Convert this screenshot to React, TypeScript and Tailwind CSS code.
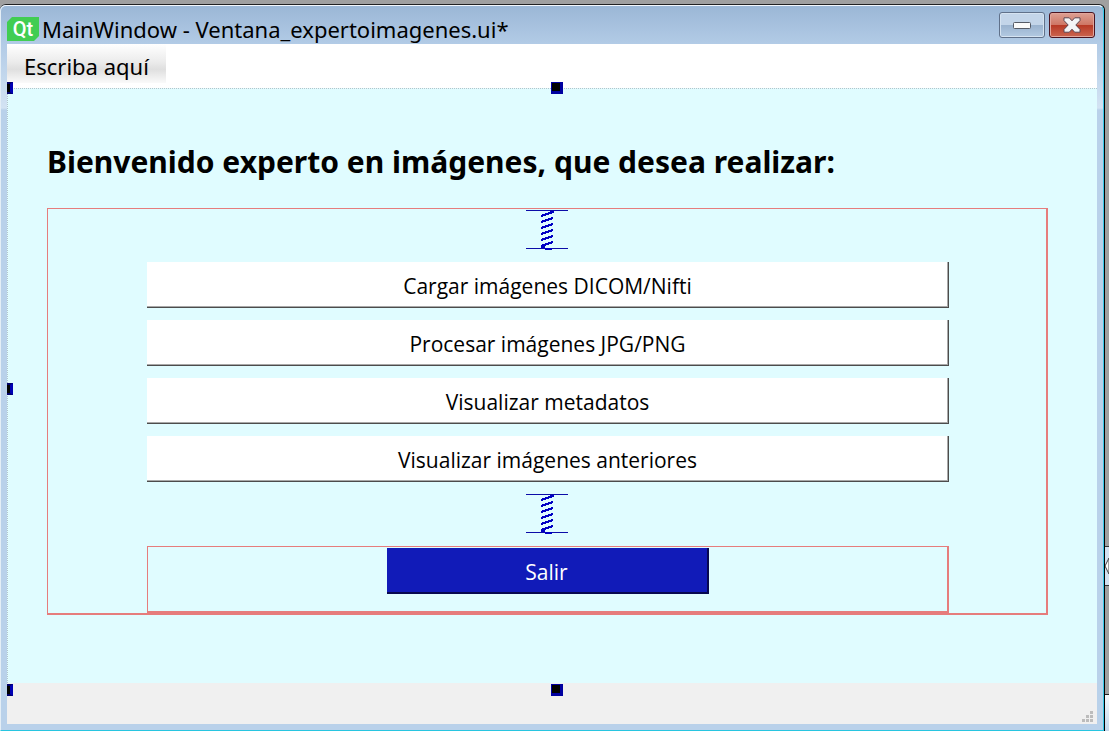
import React from "react";

const actions = [
  "Cargar imágenes DICOM/Nifti",
  "Procesar imágenes JPG/PNG",
  "Visualizar metadatos",
  "Visualizar imágenes anteriores",
];

function QtLogo() {
  return (
    <span className="relative flex h-6 w-8 shrink-0 items-center justify-center">
      <svg className="absolute inset-0 h-full w-full" viewBox="0 0 32 24" aria-hidden="true">
        <path d="M5 0H32V19L27 24H0V5Z" fill="#41cd52" />
      </svg>
      <span className="relative font-[Roboto,sans-serif] text-[20px] leading-6 font-medium text-white">Qt</span>
    </span>
  );
}

function Spring() {
  return (
    <svg className="h-10 w-11 shrink-0" viewBox="0 0 44 40" shapeRendering="crispEdges" aria-hidden="true">
      <path d="M0 .5H42M0 38.5H42" stroke="#0c0ca8" strokeWidth="1" />
      <path
        d="M15 6L27 2M15 12L27 8M15 18L27 14M15 24L27 20M15 30L27 26M15 36L27 32M15 37H19M19 39H26M24 2H28"
        stroke="#0000c4"
        strokeWidth="2.4"
        fill="none"
      />
    </svg>
  );
}

function Handle({ half = false }: { half?: boolean }) {
  return half ? (
    <span className="block h-3 w-1.5 border-y-2 border-r-[3px] border-y-[#000068] border-r-[#0000b4] bg-black" />
  ) : (
    <span className="block size-3 border-t-1 border-r-[3px] border-b-[3px] border-l-1 border-[#0000a0] bg-black" />
  );
}

function MinimizeIcon() {
  return (
    <svg className="h-[7px] w-[18px]" viewBox="0 0 18 7" aria-hidden="true">
      <rect x=".5" y=".5" width="17" height="6" rx="1" fill="#fafafa" stroke="#555b66" />
    </svg>
  );
}

function CloseIcon() {
  return (
    <svg className="h-4 w-[18px]" viewBox="0 0 18 16" aria-hidden="true">
      <path
        d="M1 .8H6.3L9 3.8L11.7 .8H17V3.6L12.8 8L17 12.4V15.2H11.7L9 12.2L6.3 15.2H1V12.4L5.2 8L1 3.6Z"
        fill="#f4f4f6"
        stroke="#5d4650"
        strokeLinejoin="round"
      />
    </svg>
  );
}

function SizeGrip() {
  return (
    <svg className="size-3" viewBox="0 0 12 12" shapeRendering="crispEdges" aria-hidden="true">
      <path
        d="M8 0h3v3h-3zM4 4h3v3h-3zM8 4h3v3h-3zM0 8h3v3h-3zM4 8h3v3h-3zM8 8h3v3h-3z"
        fill="#bcbcbc"
      />
    </svg>
  );
}

export default function App() {
  return (
    <div className="relative flex min-h-screen bg-[#a0a0a0] pt-1 font-['Noto_Sans',sans-serif] text-black">
      <div className="flex min-w-0 flex-1 flex-col rounded-t-md border-t border-r border-t-[#222] border-r-black bg-[#b9d1ea]">
        <div className="flex min-w-0 flex-1 flex-col rounded-t-md border border-t-[#f4f8fc] border-r-[#35c8e8] border-b-[#28c5e0] border-l-[#e4eef6] bg-[linear-gradient(#9bb7d6,#b2cbe6_38px,#d3e3f3_102px,#b9d1ea_104px)] px-1.5 pb-1.5">
          <header className="flex h-[38px] shrink-0 items-start justify-between">
            <div className="flex items-center gap-[3px] pt-2.5">
              <QtLogo />
              <h1 className="text-[22px] leading-[26px] whitespace-nowrap">MainWindow - Ventana_expertoimagenes.ui*</h1>
            </div>
            <div className="flex gap-1 pt-1.5 pr-0.5">
              <button
                aria-label="Minimizar"
                className="flex h-[26px] w-[46px] items-center justify-center rounded-[3px] border border-[#60718a] bg-[linear-gradient(#c3d5e9_0_48%,#9ab3cf_52%,#b3cae2)] shadow-[inset_0_0_0_1px_#d5e3f1]"
              >
                <MinimizeIcon />
              </button>
              <button
                aria-label="Cerrar"
                className="flex h-[26px] w-[46px] items-center justify-center rounded-[3px] border border-[#4b1420] bg-[linear-gradient(#dda093,#cf7766_48%,#b83a26_52%,#cb6550)] shadow-[inset_0_0_0_1px_#e2a69c]"
              >
                <CloseIcon />
              </button>
            </div>
          </header>

          <nav className="flex h-11 shrink-0 items-start bg-white">
            <button className="h-[39px] bg-[linear-gradient(#ffffff,#ececec_45%,#dfdfdf_65%,#fafafa)] px-[17px] pt-1 text-[22px] leading-8 whitespace-nowrap">
              Escriba aquí
            </button>
          </nav>

          <main className="relative flex-1 border-t border-l border-dotted border-[#b4c4ca] bg-[#e0fcff] pt-[51px] pr-[49px] pb-[68px] pl-[39px]">
            <div className="absolute -top-[7px] -bottom-[13px] -left-px flex flex-col justify-between">
              <Handle half />
              <Handle half />
              <Handle half />
            </div>
            <div className="absolute -top-[7px] -right-2 -bottom-[13px] left-0 flex flex-col items-center justify-between">
              <Handle />
              <Handle />
            </div>

            <h2 className="relative text-[30px] leading-[44px] font-bold whitespace-nowrap">
              Bienvenido experto en imágenes, que desea realizar:
            </h2>

            <section className="relative mt-6 flex flex-col items-center gap-3 border-t border-r-2 border-b-2 border-l border-[#e67c7c] pt-px pr-[97px] pl-[99px] font-['Open_Sans',sans-serif]">
              <Spring />
              {actions.map((label) => (
                <button
                  key={label}
                  className="h-[46px] w-full border-r border-b border-[#4c4c4c] bg-white pt-0.5 text-[21px] leading-7 shadow-[inset_-1px_-1px_0_#a8a8a8]"
                >
                  {label}
                </button>
              ))}
              <Spring />
              <div className="flex h-[67px] w-full items-start justify-center border-t border-r-2 border-b-2 border-l border-[#e67c7c] pt-px">
                <button className="h-[46px] w-[322px] border-r-2 border-b-2 border-[#080850] bg-[#111bb8] pt-1 text-[21px] leading-7 text-white">
                  Salir
                </button>
              </div>
            </section>
          </main>

          <footer className="flex h-[41px] shrink-0 items-end justify-end bg-[#f0f0f0] pr-[3px] pb-px">
            <SizeGrip />
          </footer>
        </div>
      </div>

      <aside className="flex w-1 shrink-0 flex-col justify-end" aria-hidden="true">
        <div className="flex h-10 items-center border-y border-[#333] bg-[#d3e1f0]">
          <svg className="h-4 w-1" viewBox="0 0 4 16">
            <path d="M4 0L0 8L4 16Z" fill="#fff" stroke="#444" />
          </svg>
        </div>
        <div className="h-[108px]" />
        <div className="h-[37px] border-t border-[#222] bg-[linear-gradient(#f4f8fc,#c4d8ec)]" />
      </aside>
    </div>
  );
}
